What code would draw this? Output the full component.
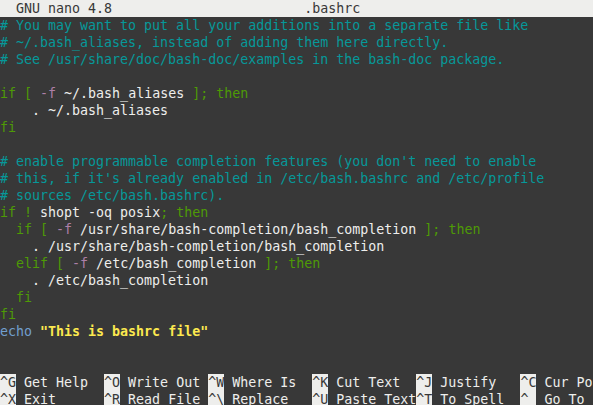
type Seg = [string, string?];

const KW = "text-[#4e9a06]";
const CM = "text-[#06989a]";
const FL = "text-[#ad7fa8]";
const BI = "text-[#729fcf]";
const ST = "text-[#fce94f] font-bold";

const lines: Seg[][] = [
  [["# You may want to put all your additions into a separate file like", CM]],
  [["# ~/.bash_aliases, instead of adding them here directly.", CM]],
  [["# See /usr/share/doc/bash-doc/examples in the bash-doc package.", CM]],
  [],
  [["if", KW], [" "], ["[", KW], [" "], ["-f", FL], [" ~/.bash_aliases "], ["];", KW], [" "], ["then", KW]],
  [["    . ~/.bash_aliases"]],
  [["fi", KW]],
  [],
  [["# enable programmable completion features (you don't need to enable", CM]],
  [["# this, if it's already enabled in /etc/bash.bashrc and /etc/profile", CM]],
  [["# sources /etc/bash.bashrc).", CM]],
  [["if", KW], [" "], ["!", KW], [" shopt -oq posix"], [";", KW], [" "], ["then", KW]],
  [["  "], ["if", KW], [" "], ["[", KW], [" "], ["-f", FL], [" /usr/share/bash-completion/bash_completion "], ["];", KW], [" "], ["then", KW]],
  [["    . /usr/share/bash-completion/bash_completion"]],
  [["  "], ["elif", KW], [" "], ["[", KW], [" "], ["-f", FL], [" /etc/bash_completion "], ["];", KW], [" "], ["then", KW]],
  [["    . /etc/bash_completion"]],
  [["  "], ["fi", KW]],
  [["fi", KW]],
  [["echo", BI], [" "], ['"This is bashrc file"', ST]],
  [],
  [],
];

const shortcuts: [string, string][][] = [
  [["^G", "Get Help"], ["^O", "Write Out"], ["^W", "Where Is"], ["^K", "Cut Text"], ["^J", "Justify"], ["^C", "Cur Pos"]],
  [["^X", "Exit"], ["^R", "Read File"], ["^\\", "Replace"], ["^U", "Paste Text"], ["^T", "To Spell"], ["^_", "Go To Line"]],
];

const Row = ({ children }: { children?: React.ReactNode }) => (
  <div className="h-[17px] leading-[17px] whitespace-pre overflow-hidden">{children}</div>
);

export default function App() {
  return (
    <div
      className="w-[593px] h-[405px] overflow-hidden bg-[#383838] text-[#eeeeec] text-[13.3px]"
      style={{ fontFamily: '"DejaVu Sans Mono", monospace' }}
    >
      <div className="h-[17px] leading-[17px] whitespace-pre bg-[#eeeeec] text-[#383838]">
        {"  GNU nano 4.8                        .bashrc"}
      </div>
      {lines.map((segs, i) => (
        <Row key={i}>
          {segs.map(([t, c], j) => (
            <span key={j} className={c}>
              {t}
            </span>
          ))}
        </Row>
      ))}
      {shortcuts.map((row, i) => (
        <Row key={"s" + i}>
          {row.map(([k, label], j) => (
            <span key={j}>
              <span className="inline-block h-[17px] bg-[#eeeeec] text-[#383838]">{k}</span>
              <span>{" " + label.padEnd(10, " ")}</span>
            </span>
          ))}
        </Row>
      ))}
    </div>
  );
}
